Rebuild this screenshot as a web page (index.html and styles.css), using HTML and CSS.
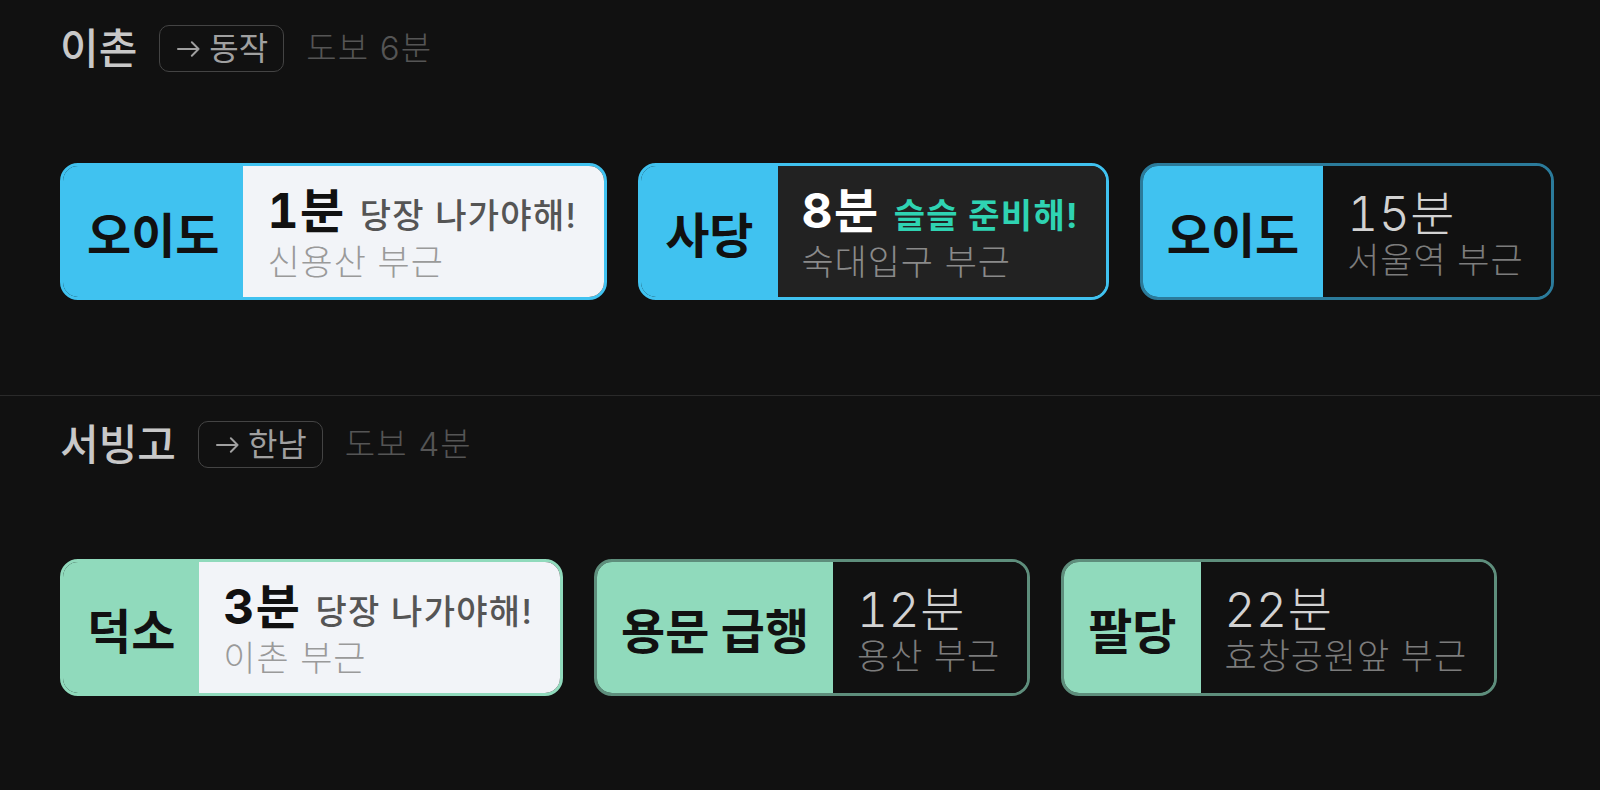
FILE: index.html
```html
<!DOCTYPE html>
<html lang="ko">
<head>
<meta charset="utf-8">
<title>도착 정보</title>
<link rel="stylesheet" href="styles.css">
</head>
<body>
<section class="station">
  <div class="station-head">
    <span class="station-name">이촌</span>
    <span class="dir-badge"><svg class="arrow" viewBox="0 0 24 16" aria-hidden="true"><path d="M1 8H22.5M15.5 1l7 7-7 7"/></svg>동작</span>
    <span class="walk">도보 6분</span>
  </div>
  <div class="cards">
    <div class="card theme-blue is-now">
      <div class="card-label">오이도</div>
      <div class="card-body">
        <div class="card-time"><span class="mins">1분</span><span class="note">당장 나가야해!</span></div>
        <div class="card-loc">신용산 부근</div>
      </div>
    </div>
    <div class="card theme-blue is-soon">
      <div class="card-label">사당</div>
      <div class="card-body">
        <div class="card-time"><span class="mins">8분</span><span class="note">슬슬 준비해!</span></div>
        <div class="card-loc">숙대입구 부근</div>
      </div>
    </div>
    <div class="card theme-blue is-later">
      <div class="card-label">오이도</div>
      <div class="card-body">
        <div class="card-time"><span class="mins">15분</span></div>
        <div class="card-loc">서울역 부근</div>
      </div>
    </div>
  </div>
</section>
<section class="station">
  <div class="station-head">
    <span class="station-name">서빙고</span>
    <span class="dir-badge"><svg class="arrow" viewBox="0 0 24 16" aria-hidden="true"><path d="M1 8H22.5M15.5 1l7 7-7 7"/></svg>한남</span>
    <span class="walk">도보 4분</span>
  </div>
  <div class="cards">
    <div class="card theme-green is-now">
      <div class="card-label">덕소</div>
      <div class="card-body">
        <div class="card-time"><span class="mins">3분</span><span class="note">당장 나가야해!</span></div>
        <div class="card-loc">이촌 부근</div>
      </div>
    </div>
    <div class="card theme-green is-later">
      <div class="card-label">용문 급행</div>
      <div class="card-body">
        <div class="card-time"><span class="mins">12분</span></div>
        <div class="card-loc">용산 부근</div>
      </div>
    </div>
    <div class="card theme-green is-later">
      <div class="card-label">팔당</div>
      <div class="card-body">
        <div class="card-time"><span class="mins">22분</span></div>
        <div class="card-loc">효창공원앞 부근</div>
      </div>
    </div>
  </div>
</section>
</body>
</html>
```

FILE: styles.css
```css
* {
  box-sizing: border-box;
  margin: 0;
  padding: 0;
}

html,
body {
  background: #111111;
}

body {
  width: 1600px;
  height: 790px;
  overflow: hidden;
  font-family: Inter, "Noto Sans CJK KR", sans-serif;
}

.station {
  padding: 25px 60px 95px;
  border-bottom: 1px solid #2a2a2a;
}

.station-head {
  display: flex;
  align-items: center;
  gap: 22px;
  height: 47px;
}

.station-name {
  font-size: 42px;
  font-weight: 500;
  line-height: 47px;
  color: #c8c8c8;
}

.dir-badge {
  display: flex;
  align-items: center;
  gap: 9px;
  height: 47px;
  padding: 0 15px 0 17px;
  border: 1.5px solid #444444;
  border-radius: 10px;
  font-size: 32px;
  line-height: 44px;
  color: #a0a0a0;
}

.arrow {
  width: 23px;
  height: 16px;
  fill: none;
  stroke: #a0a0a0;
  stroke-width: 2;
  stroke-linecap: round;
  stroke-linejoin: round;
}

.walk {
  font-size: 33px;
  font-weight: 300;
  line-height: 47px;
  letter-spacing: 1.2px;
  color: #555555;
}

.cards {
  display: flex;
  gap: 31px;
  margin-top: 91px;
}

.card {
  display: flex;
  flex: none;
  height: 137px;
  border: 3px solid transparent;
  border-radius: 18px;
  overflow: hidden;
}

.card-label {
  display: flex;
  align-items: center;
  padding: 0 24px;
  font-size: 48px;
  font-weight: 700;
  color: #111111;
  white-space: nowrap;
}

.card-body {
  display: flex;
  flex-direction: column;
  justify-content: center;
  padding: 14px 27px 0 24px;
  white-space: nowrap;
}

.card-time {
  display: flex;
  align-items: baseline;
  line-height: 42px;
}

.mins {
  font-size: 48px;
  font-weight: 700;
  letter-spacing: 1.5px;
  font-variant-numeric: tabular-nums;
}

.note {
  margin-left: 14px;
  font-size: 34px;
  letter-spacing: 1.3px;
}

.card-loc {
  font-size: 35px;
  font-weight: 300;
  line-height: 50px;
  letter-spacing: 0.9px;
}

/* colour themes */
.theme-blue .card-label {
  background: #40c2f0;
}

.theme-green .card-label {
  background: #90dabc;
}

.theme-blue.is-now,
.theme-blue.is-soon {
  border-color: #40c2f0;
}

.theme-green.is-now,
.theme-green.is-soon {
  border-color: #90dabc;
}

.theme-blue.is-later {
  border-color: #2b7b9b;
}

.theme-green.is-later {
  border-color: #5e8e7c;
}

/* states */
.is-now .card-body {
  background: #f2f4f8;
}

.is-now .mins {
  color: #111111;
}

.is-now .note {
  font-weight: 500;
  color: #555555;
}

.is-now .card-loc {
  color: #9a9a9a;
}

.is-soon .card-body {
  background: #222222;
}

.is-soon .mins {
  color: #ffffff;
}

.is-soon .note {
  font-weight: 700;
  color: #2fd3b2;
}

.is-soon .card-loc {
  color: #8a8a8a;
}

.is-later .card-body {
  background: #111111;
}

.is-later .mins {
  font-weight: 300;
  letter-spacing: 0.5px;
  color: #d2d2d2;
}

.is-later .card-loc {
  color: #7c7c7c;
}
```
